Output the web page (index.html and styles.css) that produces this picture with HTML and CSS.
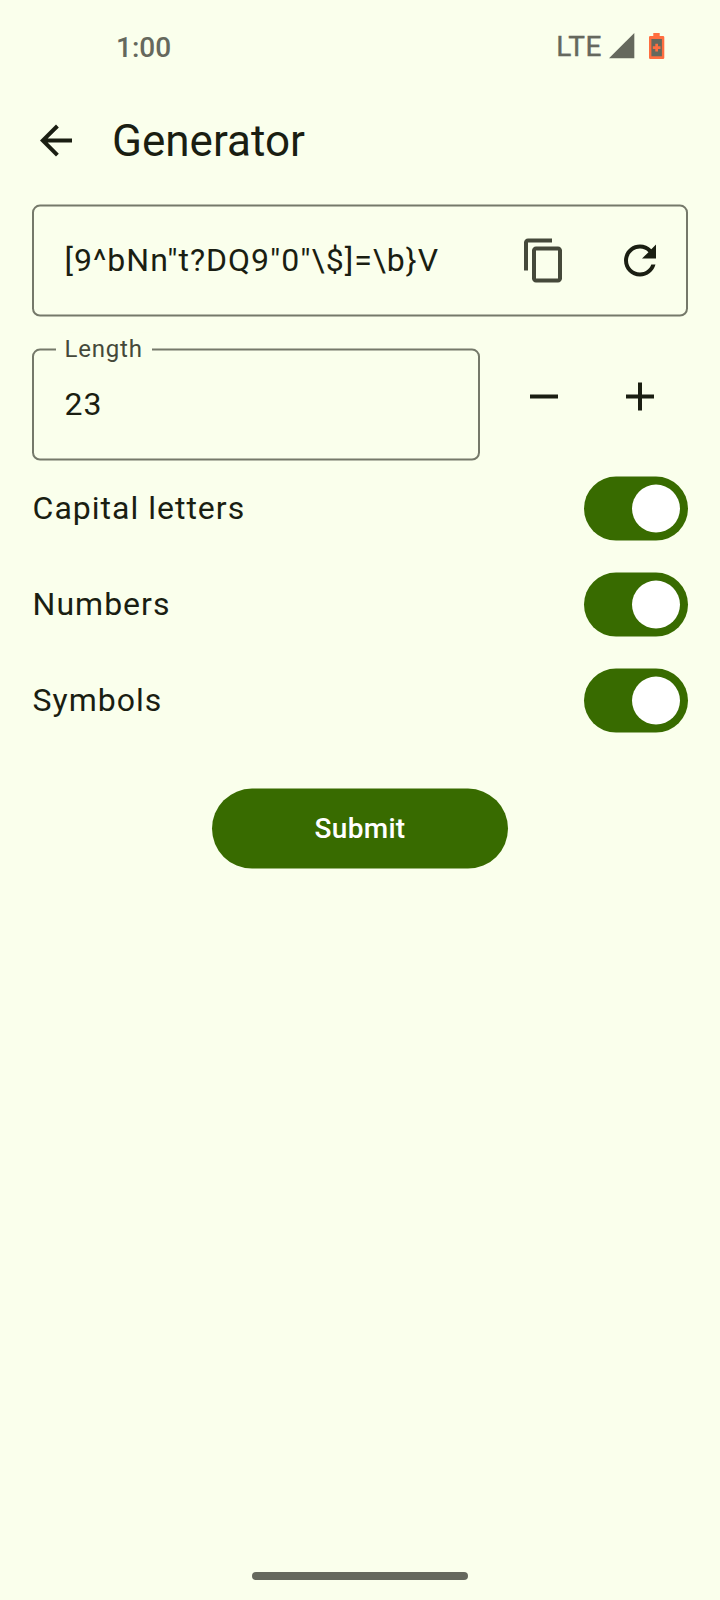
FILE: index.html
```html
<!DOCTYPE html>
<html lang="en">
<head>
<meta charset="utf-8">
<title>Generator</title>
<link rel="stylesheet" href="styles.css">
</head>
<body>
<div class="screen">
  <div class="status">
    <span class="clock">1:00</span>
    <div class="status-icons">
      <span class="network">LTE</span>
      <svg class="signal" width="26" height="26" viewBox="0 0 26 26"><path d="M0 25.3 25.3 0v25.3z"/></svg>
      <svg class="battery" width="16" height="26" viewBox="0 0 16 26">
        <path class="battery-case" d="M4.3 0h6.4v3h3.3a1.3 1.3 0 0 1 1.3 1.3v20.4a1.3 1.3 0 0 1-1.3 1.3H1.3A1.3 1.3 0 0 1 0 24.7V4.300A1.300 1.300 0 0 1 1.300 3h3z"/>
        <path class="battery-level" d="M2.400 6H12.900v17.300H2.400z"/>
        <path class="battery-case" d="M6.300 10.800h2.700v2.500h2.500v2.700H9v2.500H6.300V16H3.800v-2.700h2.500z"/>
      </svg>
    </div>
  </div>
  <div class="content">
    <header class="app-bar">
      <button class="icon-button back" aria-label="Back">
        <svg width="48" height="48" viewBox="0 0 24 24"><path d="M20 11H7.830l5.590-5.590L12 4l-8 8 8 8 1.410-1.410L7.830 13H20v-2z"/></svg>
      </button>
      <h1 class="title">Generator</h1>
    </header>
    <main class="form">
      <div class="field password">
        <span class="value">[9^bNn"t?DQ9"0"\$]=\b}V</span>
        <button class="icon-button copy" aria-label="Copy">
          <svg width="48" height="48" viewBox="0 0 24 24"><path d="M16 1H4c-1.100 0-2 .9-2 2v14h2V3h12V1zm3 4H8c-1.100 0-2 .9-2 2v14c0 1.100.9 2 2 2h11c1.100 0 2-.9 2-2V7c0-1.100-.9-2-2-2zm0 16H8V7h11v14z"/></svg>
        </button>
        <button class="icon-button" aria-label="Regenerate">
          <svg width="48" height="48" viewBox="0 0 24 24"><path d="M17.650 6.350C16.200 4.900 14.210 4 12 4c-4.420 0-7.990 3.580-7.990 8s3.570 8 7.990 8c3.730 0 6.840-2.550 7.730-6h-2.080c-.82 2.330-3.040 4-5.650 4-3.310 0-6-2.690-6-6s2.690-6 6-6c1.660 0 3.140.69 4.220 1.780L13 11h7V4l-2.350 2.350z"/></svg>
        </button>
      </div>
      <div class="length-row">
        <div class="field length">
          <span class="label">Length</span>
          <span class="value">23</span>
        </div>
        <button class="icon-button" aria-label="Decrease">
          <svg width="48" height="48" viewBox="0 0 24 24"><path d="M19 13H5v-2h14v2z"/></svg>
        </button>
        <button class="icon-button" aria-label="Increase">
          <svg width="48" height="48" viewBox="0 0 24 24"><path d="M19 13h-6v6h-2v-6H5v-2h6V5h2v6h6v2z"/></svg>
        </button>
      </div>
      <div class="option"><span class="option-name">Capital letters</span><span class="switch"><span class="thumb"></span></span></div>
      <div class="option"><span class="option-name">Numbers</span><span class="switch"><span class="thumb"></span></span></div>
      <div class="option"><span class="option-name">Symbols</span><span class="switch"><span class="thumb"></span></span></div>
      <button class="submit">Submit</button>
    </main>
  </div>
  <div class="nav-bar"><div class="nav-handle"></div></div>
</div>
</body>
</html>
```

FILE: styles.css
```css
* {
  box-sizing: border-box;
}

body {
  margin: 0;
  background: #faffec;
  color: #1a1e12;
  font-family: Roboto, sans-serif;
}

button {
  border: 0;
  padding: 0;
  margin: 0;
  background: none;
  color: inherit;
  font: inherit;
}

svg {
  display: block;
  fill: currentColor;
}

.screen {
  display: flex;
  flex-direction: column;
  width: 720px;
  height: 1600px;
  overflow: hidden;
}

.status {
  display: flex;
  justify-content: space-between;
  height: 77px;
  padding: 31px 55px 0 116px;
  color: #65685d;
  font-size: 28px;
  font-weight: 500;
  line-height: 34px;
}

.status-icons {
  display: flex;
}

.network {
  margin: -1px 7px 0 0;
  font-weight: 400;
  letter-spacing: 0.6px;
  -webkit-text-stroke: 0.4px currentColor;
}

.signal {
  margin: 2px 14px 0 0;
}

.battery {
  margin-top: 2px;
}

.battery-case {
  fill: #ff6e40;
}

.battery-level {
  fill: #65685d;
}

.content {
  flex: 1;
  transform: translateY(-0.4px);
}

.app-bar {
  display: flex;
  align-items: center;
  height: 128px;
  padding-left: 8px;
}

.icon-button {
  display: flex;
  flex: none;
  align-items: center;
  justify-content: center;
  width: 96px;
  height: 96px;
}

.title {
  margin: 0 0 0 8px;
  padding-bottom: 1px;
  font-size: 44px;
  font-weight: 400;
  line-height: 56px;
}

.form {
  display: flex;
  flex-direction: column;
  padding: 0 32px;
}

.field {
  display: flex;
  align-items: center;
  height: 112px;
  border: 2px solid #75796a;
  border-radius: 8px;
  padding-left: 30.5px;
  font-size: 32px;
  letter-spacing: 1px;
}

.value {
  padding-bottom: 2px;
}

.password {
  padding-right: 0;
}

.password .value {
  flex: 1;
}

.password .icon-button:last-child {
  margin-right: -2px;
}

.copy {
  color: #45493a;
}

.length-row {
  display: flex;
  align-items: center;
  height: 128px;
  margin-top: 16px;
}

.length {
  position: relative;
  align-self: flex-end;
  width: 448px;
  margin-right: 16px;
}

.label {
  position: absolute;
  top: -18px;
  left: 22px;
  width: 96px;
  padding-left: 8.5px;
  background: #faffec;
  color: #45493a;
  font-size: 24px;
  line-height: 32px;
  letter-spacing: 0.8px;
}

.option {
  display: flex;
  align-items: center;
  justify-content: space-between;
  height: 96px;
  font-size: 32px;
  letter-spacing: 1px;
}

.option-name {
  padding: 0 0 2px 0.6px;
}

.switch {
  display: flex;
  justify-content: flex-end;
  width: 104px;
  height: 64px;
  padding: 8px;
  border-radius: 32px;
  background: #386b00;
}

.thumb {
  width: 48px;
  height: 48px;
  border-radius: 50%;
  background: #fff;
}

.submit {
  align-self: center;
  width: 296px;
  height: 80px;
  margin-top: 40px;
  padding-bottom: 2px;
  border-radius: 40px;
  background: #386b00;
  color: #fff;
  font-size: 28px;
  font-weight: 500;
  letter-spacing: 0.3px;
}

.nav-bar {
  display: flex;
  justify-content: center;
  height: 28px;
}

.nav-handle {
  width: 216px;
  height: 8px;
  border-radius: 4px;
  background: #65685d;
}
```
